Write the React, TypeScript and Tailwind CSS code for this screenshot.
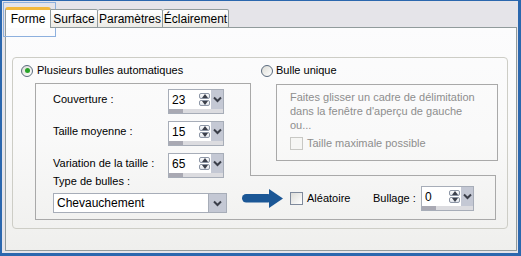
import type React from "react";

const Chevron: React.FC = () => (
	<svg width="9" height="7" viewBox="0 0 9 7">
		<path d="M1 1.5 L4.5 5 L8 1.5" fill="none" stroke="#3b3f4a" strokeWidth="2" />
	</svg>
);

const SpinButtons: React.FC = () => (
	<div className="flex flex-col justify-center gap-px w-[12px] py-[3px] pr-px">
		<div className="flex-1 border border-[#8d96a6] rounded-[2px] bg-gradient-to-b from-white to-[#dfe3ea] flex items-center justify-center">
			<svg width="6" height="4" viewBox="0 0 6 4">
				<path d="M0 4 L3 0 L6 4 Z" fill="#3b3f4a" />
			</svg>
		</div>
		<div className="flex-1 border border-[#8d96a6] rounded-[2px] bg-gradient-to-b from-white to-[#dfe3ea] flex items-center justify-center">
			<svg width="6" height="4" viewBox="0 0 6 4">
				<path d="M0 0 L6 0 L3 4 Z" fill="#3b3f4a" />
			</svg>
		</div>
	</div>
);

const Spinner: React.FC<{ value: string; top?: boolean; w?: string }> = ({
	value,
	top,
	w = "w-[56px]",
}) => (
	<div className={`${w} h-[25px] flex flex-col border border-[#a7adb8] bg-white`}>
		<div className="flex flex-1">
			<div
				className={`flex-1 pl-[3px] flex ${top ? "items-start pt-px" : "items-center"} text-[12px]`}
			>
				{value}
			</div>
			<SpinButtons />
			<div className="w-[12px] bg-[#c4c8d4] flex items-center justify-center">
				<Chevron />
			</div>
		</div>
		<div className="h-[5px] flex bg-[#dcdce0]">
			<div className="w-[14px] bg-[#a9a9b3]" />
		</div>
	</div>
);

const Radio: React.FC<{ checked?: boolean }> = ({ checked }) => (
	<div className="w-[12px] h-[12px] rounded-full border border-[#5a6a7e] bg-gradient-to-br from-[#dcdcd6] to-white flex items-center justify-center">
		{checked && <div className="w-[5px] h-[5px] rounded-full bg-[#29a329]" />}
	</div>
);

const Checkbox: React.FC<{ disabled?: boolean }> = ({ disabled }) => (
	<div
		className={`w-[13px] h-[13px] border ${disabled ? "border-[#c8c8c4] bg-[#f6f6f4]" : "border-[#7f8a9c] bg-gradient-to-br from-[#dcdcd8] to-white"}`}
	/>
);

const Label: React.FC<{ text: string; value: string }> = ({ text, value }) => (
	<div className="flex pl-[17px]">
		<div className="w-[115px] h-[20px] flex items-center">{text}</div>
		<Spinner value={value} />
	</div>
);

export default function App() {
	return (
		<div className="relative w-[521px] h-[256px] overflow-hidden bg-[#e5e4e9] border-l-2 border-r-[3px] border-b-[3px] border-t border-[#2b67ae] font-['Liberation_Sans',Arial,sans-serif] text-[11px] text-black">
			<div className="pl-[3px] pt-[6px]">
				{/* Tabs */}
				<div className="relative z-10 -mb-px flex items-end h-[21px]">
					<div className="w-[46px] h-[21px] bg-white border-x border-[#919b9c] border-t-[3px] border-t-[#f3b93c] rounded-t-[3px] flex items-center justify-center text-[12px]">
						Forme
					</div>
					<div className="w-[47px] h-[19px] bg-gradient-to-b from-white to-[#ecebe6] border-t border-r border-b border-[#919b9c] rounded-tr-[2px] flex items-center justify-center text-[12px]">
						Surface
					</div>
					<div className="w-[65px] h-[19px] bg-gradient-to-b from-white to-[#ecebe6] border-t border-r border-b border-[#919b9c] rounded-t-[2px] flex items-center justify-center text-[12px]">
						Paramètres
					</div>
					<div className="w-[66px] h-[19px] bg-gradient-to-b from-white to-[#ecebe6] border-t border-r border-b border-[#919b9c] rounded-t-[2px] flex items-center justify-center text-[12px]">
						Éclairement
					</div>
				</div>

				{/* Panel */}
				<div className="w-[512px] h-[224px] border border-[#919b9c] bg-gradient-to-b from-[#fcfcfd] via-[#f9f9f9] to-[#efefed] pl-[6px] pt-[29px]">
					<div className="w-[496px] h-[172px] border border-[#cdcdc6] rounded-[4px]">
						{/* Radios */}
						<div className="mt-[6px] h-[13px] flex items-center pl-[8px]">
							<div className="w-[240px] flex items-center gap-[4px]">
								<Radio checked />
								<span>Plusieurs bulles automatiques</span>
							</div>
							<div className="flex items-center gap-[3px]">
								<Radio />
								<span>Bulle unique</span>
							</div>
						</div>

						{/* L-shaped box */}
						<div className="mt-[6px] ml-[22px] flex">
							<div className="w-[215px] h-[137px] border-l border-t border-b border-[#a9a9a9] pt-[5px]">
								<div className="flex flex-col gap-[7px]">
									<Label text="Couverture :" value="23" />
									<Label text="Taille moyenne :" value="15" />
									<Label text="Variation de la taille :" value="65" />
								</div>
								<div className="pl-[17px] -mt-[3px] leading-[13px]">
									Type de bulles :
								</div>
								<div className="ml-[17px] mt-[5px] w-[174px] h-[20px] border border-[#a7adb8] bg-white flex">
									<div className="flex-1 pl-[3px] flex items-center text-[12px]">
										Chevauchement
									</div>
									<div className="w-[18px] bg-[#c4c8d4] border-l border-[#a7adb8] flex items-center justify-center">
										<Chevron />
									</div>
								</div>
							</div>
							<div className="w-[246px] h-[137px] flex flex-col">
								<div className="h-[92px] border-l border-[#a9a9a9] pl-[25px] pt-px">
									<div className="w-[222px] h-[77px] border border-[#a9a9a9] pl-[13px] pt-[5px] text-[#8e8e8e] leading-[14px]">
										<div>Faites glisser un cadre de délimitation</div>
										<div>dans la fenêtre d'aperçu de gauche</div>
										<div>ou...</div>
										<div className="mt-[4px] flex items-center gap-[4px]">
											<Checkbox disabled />
											<span>Taille maximale possible</span>
										</div>
									</div>
								</div>
								<div className="flex-1 border-t border-r border-b border-[#a9a9a9] flex items-center pt-[2px]">
									<svg width="41" height="19" viewBox="0 0 41 19" className="-ml-[8px]">
										<rect x="0" y="5" width="30" height="8.5" rx="4.2" fill="#1b5796" />
										<path d="M27 0 L41 9.5 L27 19 Z" fill="#1b5796" />
									</svg>
									<div className="ml-[7px]">
										<Checkbox />
									</div>
									<span className="ml-[4px] w-[66px]">Aléatoire</span>
									<span className="w-[48px]">Bullage :</span>
									<Spinner value="0" top w="w-[53px]" />
								</div>
							</div>
						</div>
					</div>
				</div>
			</div>

			{/* focus highlight round the active tab */}
			<div className="absolute left-[1px] top-[1px] w-[53px] h-[35px] border border-[#8db0de]" />
		</div>
	);
}
